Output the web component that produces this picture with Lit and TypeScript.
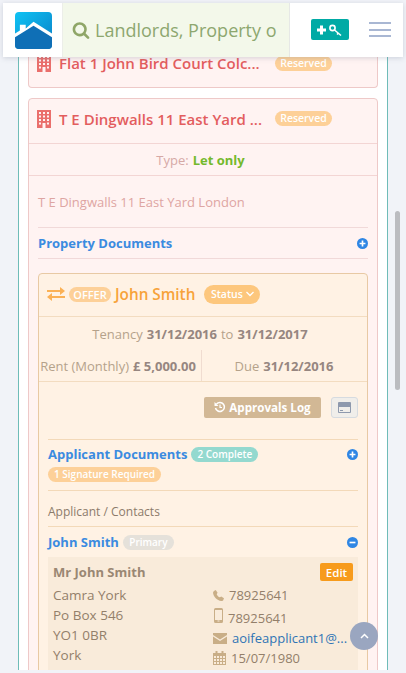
import { LitElement, html, css, svg } from "lit";
import { customElement } from "lit/decorators.js";

const ic = (vb: string, body: unknown, cls = "") => html`<svg class="ic ${cls}" viewBox=${vb} aria-hidden="true">${body}</svg>`;

const building = () => ic("0 0 14 18", svg`<path fill-rule="evenodd" fill="currentColor" d="M0 0h14v18H0zM2 2v2h2V2zM6 2v2h2V2zM10 2v2h2V2zM2 5.500v2h2v-2zM6 5.500v2h2v-2zM10 5.500v2h2v-2zM2 9v2h2V9zM6 9v2h2V9zM10 9v2h2V9zM2 12.500v2h2v-2zM10 12.500v2h2v-2zM5.500 13v5h3v-5z"/>`, "bld");
const search = () => ic("0 0 1792 1792", svg`<path fill="currentColor" d="M1216 832q0-185-131.500-316.500t-316.500-131.500-316.500 131.500-131.500 316.500 131.500 316.500 316.500 131.500 316.500-131.500 131.500-316.500zm512 832q0 52-38 90t-90 38q-54 0-90-38l-343-342q-179 124-399 124-143 0-273.500-55.500t-225-150-150-225-55.500-273.500 55.500-273.500 150-225 225-150 273.500-55.500 273.500 55.500 225 150 150 225 55.500 273.500q0 220-124 399l343 343q37 37 37 90z"/>`, "srch");
const plusCircle = () => ic("0 0 12 12", svg`<circle cx="6" cy="6" r="6" fill="currentColor"/><path d="M2.800 6h6.400M6 2.800v6.400" stroke="#fff" stroke-width="1.800"/>`, "circ");
const minusCircle = () => ic("0 0 12 12", svg`<circle cx="6" cy="6" r="6" fill="currentColor"/><path d="M2.800 6h6.400" stroke="#fff" stroke-width="1.800"/>`, "circ");

@customElement("app-root")
export class AppRoot extends LitElement {
  static styles = css`
    :host { display: block; height: 673px; overflow: hidden; position: relative; background: #f1f3f8; font-family: "Open Sans", sans-serif; color: #8a7a6a; }
    * { box-sizing: border-box; }
    .ic { display: block; flex: none; }
    .page { height: 673px; padding: 3px; display: flex; flex-direction: column; }
    header { height: 54px; flex: none; display: flex; background: #fff; box-shadow: 0 1px 5px rgba(120,130,150,.3); position: relative; z-index: 2; }
    .logo { width: 59px; flex: none; display: flex; align-items: center; padding-left: 12px; }
    .logo svg { width: 37px; height: 37px; display: block; }
    .search { width: 228px; flex: none; background: #f3f8ea; border-left: 1px solid #eceee9; border-right: 1px solid #e6e8e6; display: flex; align-items: center; padding-left: 9px; gap: 5px; color: #8da76f; font-size: 18px; white-space: nowrap; overflow: hidden; }
    .srch { width: 18px; height: 18px; color: #8fa668; }
    .tools { flex: 1; display: flex; align-items: center; padding: 0 0 0 21px; }
    .add { width: 38px; height: 21px; background: #00aaa5; border-radius: 2px; display: flex; align-items: center; justify-content: center; margin-top: -1px; }
    .add svg { width: 28px; height: 14px; }
    .burger { margin-left: 20px; width: 22px; display: flex; flex-direction: column; gap: 4.500px; margin-top: -1px; }
    .burger i { display: block; height: 2px; background: #a9b7d3; }
    .body { flex: 1; min-height: 0; overflow: hidden; padding: 0 15px; }
    .frame { background: #fff; border: solid #6fbcb8; border-width: 0 1px; padding: 0 9px; height: 100%; }
    .card { background: #fff3f2; border: 1px solid #eec9c8; border-radius: 4px; }
    .first { border-top: 0; border-radius: 0 0 4px 4px; height: 31px; margin-bottom: 10px; }
    .title { display: flex; align-items: center; padding: 0 8px; gap: 8px; color: #e35d5e; font-weight: 600; font-size: 15px; }
    .first .title { height: 12px; }
    .main .title { height: 44px; padding-bottom: 5px; }
    .bld { width: 14px; height: 18px; color: #ea6f6c; }
    .name { width: 203px; white-space: nowrap; }
    .badge { display: inline-block; border-radius: 9px; color: #fff; font-size: 10px; font-weight: 600; line-height: 15px; padding: 0 6px; background: #fdd098; white-space: nowrap; }
    .res { margin-left: 5px; width: 57px; text-align: center; font-size: 10.500px; padding: 0; }
    .type { border-top: 1px solid #f3d5d4; border-bottom: 1px solid #f3d5d4; height: 33px; display: flex; align-items: center; justify-content: center; gap: 4px; padding-right: 5px; font-size: 13px; color: #d6a9a6; }
    .type b { color: #74b92d; font-weight: 700; }
    .addr { padding: 0 9px; }
    .addr p { margin: 0; height: 52px; display: flex; align-items: center; padding-top: 1px; font-size: 13px; color: #dea5a2; border-bottom: 1px solid #f1d9d9; }
    .docs { display: flex; align-items: center; justify-content: space-between; color: #3b8be0; font-weight: 700; font-size: 13px; }
    .addr .docs { height: 31px; border-bottom: 1px solid #f1d9d9; margin-bottom: 14px; }
    .circ { width: 11px; height: 11px; color: #2f86e4; }
    .offer { margin: 0 9px; background: #fff2e4; border: 1px solid #e8c9a4; border-radius: 4px; height: 500px; }
    .ohead { height: 43px; border-bottom: 1px solid #f3dcc0; display: flex; align-items: center; padding: 0 8px 2px; color: #f7a33a; font-size: 15.300px; font-weight: 600; }
    .ohead .swap { width: 18px; height: 14px; margin-right: 4px; color: #fbb155; }
    .ohead .o { font-size: 11px; width: 42px; padding: 0; text-align: center; font-weight: 600; margin-right: 4px; line-height: 15px; }
    .status { margin-left: 9px; height: 19px; width: 56px; border-radius: 10px; background: #fdc77d; color: #fff; font-size: 10.500px; font-weight: 600; display: flex; align-items: center; justify-content: center; gap: 3px; }
    .status svg { width: 8px; height: 6px; }
    .ten { height: 33px; display: flex; align-items: center; justify-content: center; gap: 4px; padding-right: 6px; font-size: 13px; color: #b5a28b; }
    .ten b, .rent b { color: #968680; font-weight: 700; }
    .rent { display: flex; height: 32px; border-bottom: 1px solid #f3dcc0; font-size: 13px; color: #b5a28b; }
    .rent div { display: flex; align-items: center; justify-content: center; gap: 4px; white-space: nowrap; }
    .rent .l { width: 163px; border-right: 1px solid #f0dcd0; padding-right: 4px; }
    .rent .r { flex: 1; padding-right: 1px; }
    .inner { padding: 0 9px; }
    .acts { display: flex; justify-content: flex-end; align-items: center; gap: 10px; padding-top: 15px; height: 58px; border-bottom: 1px solid #f3d9b8; padding-bottom: 21px; }
    .log { width: 117px; height: 21px; background: #d2b895; border-radius: 2px; color: #fff; font-weight: 700; font-size: 11.600px; padding-bottom: 1px; display: flex; align-items: center; justify-content: center; gap: 3px; }
    .log svg { width: 12px; height: 12px; }
    .cardbtn { width: 27px; height: 21px; background: #f0eeea; border: 1px solid #d6dbe0; border-radius: 3px; display: flex; align-items: center; justify-content: center; }
    .cardbtn svg { width: 13px; height: 11px; color: #8e99ad; }
    .adoc { border-bottom: 1px solid #f3d9b8; height: 51px; display: block; }
    .adoc .docs { padding-top: 5px; }
    .adoc .left { display: flex; align-items: center; gap: 4px; }
    .adoc .sig { margin-top: 4px; display: block; width: fit-content; }
    .teal { background: #94d9cf; }
    .lbl { height: 36px; border-bottom: 1px solid #f3d9b8; display: flex; align-items: center; font-size: 12px; color: #8c7b6b; padding-top: 5px; }
    .jsrow { height: 30px; display: flex; align-items: center; justify-content: space-between; color: #3b8be0; font-size: 13px; font-weight: 700; }
    .jsrow .left { display: flex; align-items: center; gap: 4px; }
    .grey { background: #e5e1da; width: 51px; padding: 0; text-align: center; }
    .panel { background: #f9ebda; padding: 5px 5px 0; height: 130px; font-size: 13.500px; color: #937f6a; }
    .phead { display: flex; justify-content: space-between; align-items: center; height: 20px; font-weight: 700; color: #9a8773; font-size: 13px; }
    .edit { width: 33px; height: 18px; background: #f79b1c; color: #fff; border-radius: 2px; font-size: 11.500px; font-weight: 600; display: flex; align-items: center; justify-content: center; }
    .cols { display: flex; margin-top: 3px; }
    .lc { width: 160px; flex: none; }
    .rc { width: 140px; flex: none; font-size: 13px; }
    .cols p { margin: 0; height: 20px; white-space: nowrap; display: flex; align-items: center; }
    .rc p { gap: 5px; }
    .rc p.mob { height: 23px; padding-top: 3px; align-items: center; gap: 5px; padding-left: 1px; }
    .rc svg { color: #c9ae87; }
    .mobi { margin-top: -5px; }
    .rc a { color: #2f74b5; text-decoration: none; }
    .scroll { position: absolute; right: 6px; top: 211px; width: 5px; height: 179px; border-radius: 3px; background: #bbbcc0; z-index: 3; }
    .fab { position: absolute; left: 350px; top: 622px; width: 28px; height: 28px; border-radius: 50%; background: #9aa6c0; display: flex; align-items: center; justify-content: center; z-index: 3; }
    .fab svg { width: 9px; height: 6px; }
  `;

  render() {
    return html`
      <div class="page">
        <header>
          <div class="logo">
            <svg viewBox="0 0 38 38">
              <defs><linearGradient id="lg" x1="0" y1="0" x2="1" y2="1"><stop offset="0" stop-color="#0fc3f4"/><stop offset="1" stop-color="#0a7fc6"/></linearGradient></defs>
              <rect width="38" height="38" rx="4" fill="url(#lg)"/>
              <path d="M0 34a4 4 0 0 0 4 4h30a4 4 0 0 0 4-4V22L19 12 0 22z" fill="#0f6fb6"/>
              <path d="M5 13h6v4l8-7 19 12v4L19 14 0 26v-4l5-3z" fill="#fff"/>
            </svg>
          </div>
          <div class="search">${search()}<span>Landlords, Property o</span></div>
          <div class="tools">
            <div class="add">
              <svg viewBox="0 0 28 14"><path d="M1 7h9M5.500 2.500v9" stroke="#fff" stroke-width="3"/><circle cx="16.500" cy="5" r="2.600" fill="none" stroke="#fff" stroke-width="1.600"/><path d="M18.500 7l6.500 5.500M22.500 10l-1.500 1.500" stroke="#fff" stroke-width="1.500"/></svg>
            </div>
            <div class="burger"><i></i><i></i><i></i></div>
          </div>
        </header>
        <div class="body"><div class="frame">
          <div class="card first">
            <div class="title">${building()}<span class="name">Flat 1 John Bird Court Colc...</span><span class="badge res">Reserved</span></div>
          </div>
          <div class="card main">
            <div class="title">${building()}<span class="name">T E Dingwalls 11 East Yard ...</span><span class="badge res">Reserved</span></div>
            <div class="type"><span>Type:</span><b>Let only</b></div>
            <div class="addr">
              <p>T E Dingwalls 11 East Yard London</p>
              <div class="docs"><span>Property Documents</span>${plusCircle()}</div>
            </div>
            <div class="offer">
              <div class="ohead">
                ${ic("0 0 18 14", svg`<path fill="currentColor" d="M0 3h13V0l5 4-5 4V5H0zM18 9v2H5v3L0 10l5-4v3z"/>`, "swap")}
                <span class="badge o">OFFER</span><span>John Smith</span>
                <span class="status">Status <svg viewBox="0 0 8 6"><path d="M.5 1l3.500 3.500L7.500 1" fill="none" stroke="#fff" stroke-width="1.300"/></svg></span>
              </div>
              <div class="ten"><span>Tenancy</span><b>31/12/2016</b><span>to</span><b>31/12/2017</b></div>
              <div class="rent">
                <div class="l"><span>Rent (Monthly)</span><b>£ 5,000.00</b></div>
                <div class="r"><span>Due</span><b>31/12/2016</b></div>
              </div>
              <div class="inner">
                <div class="acts">
                  <div class="log">
                    <svg viewBox="0 0 12 12"><path d="M2.500 3A4.500 4.500 0 1 1 1.500 7" fill="none" stroke="#fff" stroke-width="1.500"/><path d="M.5 1v4h4z" fill="#fff"/><path d="M6 3.500V6.500h2" fill="none" stroke="#fff" stroke-width="1.200"/></svg>
                    <span>Approvals Log</span>
                  </div>
                  <div class="cardbtn">
                    <svg viewBox="0 0 13 11"><path fill-rule="evenodd" fill="currentColor" d="M1 0h11a1 1 0 0 1 1 1v9a1 1 0 0 1-1 1H1a1 1 0 0 1-1-1V1a1 1 0 0 1 1-1zM1 5v5h11V5zM2 8h3v1H2z"/></svg>
                  </div>
                </div>
                <div class="adoc">
                  <div class="docs"><span class="left"><span>Applicant Documents</span><span class="badge teal">2 Complete</span></span>${plusCircle()}</div>
                  <span class="badge sig">1 Signature Required</span>
                </div>
                <div class="lbl">Applicant / Contacts</div>
                <div class="jsrow"><span class="left"><span>John Smith</span><span class="badge grey">Primary</span></span>${minusCircle()}</div>
                <div class="panel">
                  <div class="phead"><span>Mr John Smith</span><span class="edit">Edit</span></div>
                  <div class="cols">
                    <div class="lc">
                      <p>Camra York</p><p>Po Box 546</p><p>YO1 0BR</p><p>York</p>
                    </div>
                    <div class="rc">
                      <p><svg class="ic" width="11" height="11" viewBox="0 0 12 12"><path fill="currentColor" d="M3 0l2 3-1 1.500c.7 1.500 2 2.800 3.500 3.500L9 7l3 2-1 2.500c-.5.500-1.500.5-2 .5C4.500 11.500.5 7.500 0 3c0-.5.500-1.500 1-2z"/></svg><span>78925641</span></p>
                      <p class="mob"><svg class="ic mobi" width="9" height="15" viewBox="0 0 9 15"><path fill-rule="evenodd" fill="currentColor" d="M1.500 0h6A1.500 1.500 0 0 1 9 1.500v12A1.500 1.500 0 0 1 7.500 15h-6A1.500 1.500 0 0 1 0 13.500v-12A1.500 1.500 0 0 1 1.500 0zM1 2v10h7V2zM3.500 12.500v1h2v-1z"/></svg><span>78925641</span></p>
                      <p><svg class="ic" width="14" height="11" viewBox="0 0 14 11"><path fill="currentColor" d="M0 0h14v2L7 6.500 0 2zM0 3.500L7 8l7-4.500V11H0z"/></svg><a href="#">aoifeapplicant1@...</a></p>
                      <p><svg class="ic" width="13" height="14" viewBox="0 0 13 14"><path fill-rule="evenodd" fill="currentColor" d="M0 2h2.500V0h2v2h4V0h2v2H13v12H0zM1 5v2h2V5zM4 5v2h2V5zM7 5v2h2V5zM10 5v2h2V5zM1 8v2h2V8zM4 8v2h2V8zM7 8v2h2V8zM10 8v2h2V8zM1 11v2h2v-2zM4 11v2h2v-2zM7 11v2h2v-2zM10 11v2h2v-2z"/></svg><span>15/07/1980</span></p>
                    </div>
                  </div>
                </div>
              </div>
            </div>
          </div>
        </div></div>
      </div>
      <div class="scroll"></div>
      <div class="fab"><svg viewBox="0 0 9 6"><path d="M1 5l3.500-3.500L8 5" fill="none" stroke="#fff" stroke-width="1.500"/></svg></div>
    `;
  }
}
